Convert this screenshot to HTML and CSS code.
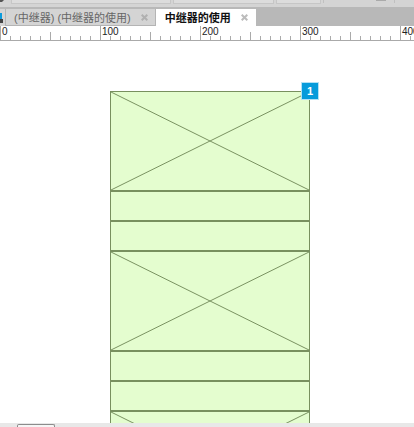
FILE: index.html
```html
<!DOCTYPE html>
<html lang="zh">
<head>
<meta charset="utf-8">
<title>中继器的使用</title>
<link rel="stylesheet" href="styles.css">
</head>
<body>
<div class="toolbar">
  <svg class="tool-icon" width="11" height="3" viewBox="0 0 11 3" aria-hidden="true"><path d="M0 0h4l-2 2H0z" fill="#555"/></svg>
  <span class="field field-wide"></span>
  <span class="field field-mid"></span>
  <span class="field field-small"></span>
  <span class="divider"></span>
  <span class="dash"></span>
  <span class="divider"></span>
</div>
<nav class="tabs">
  <svg class="tabs-icon" width="5" height="17" viewBox="0 0 5 17" aria-hidden="true"><path d="M0 4h2v6H0z" fill="#0a9bdc"/><path d="M0 10h3v4H0z" fill="#444"/></svg>
  <div class="tab">
    <a href="#master">(中继器) (中继器的使用)</a>
    <button class="close" type="button" aria-label="关闭"><svg width="7" height="7" viewBox="0 0 7 7"><path d="M.7.7l5.6 5.6M6.3.7L.7 6.3"/></svg></button>
  </div>
  <div class="tab active">
    <a href="#page">中继器的使用</a>
    <button class="close" type="button" aria-label="关闭"><svg width="7" height="7" viewBox="0 0 7 7"><path d="M.7.7l5.6 5.6M6.3.7L.7 6.3"/></svg></button>
  </div>
</nav>
<div class="ruler">
  <span>0</span><span>100</span><span>200</span><span>300</span><span>400</span>
</div>
<main class="canvas">
  <div class="repeater">
    <div class="cell picture"><svg viewBox="0 0 200 100" preserveAspectRatio="none"><path d="M0 0L200 100M0 100L200 0"/></svg></div>
    <div class="cell"></div>
    <div class="cell"></div>
    <div class="cell picture"><svg viewBox="0 0 200 100" preserveAspectRatio="none"><path d="M0 0L200 100M0 100L200 0"/></svg></div>
    <div class="cell"></div>
    <div class="cell"></div>
    <div class="cell picture"><svg viewBox="0 0 200 100" preserveAspectRatio="none"><path d="M0 0L200 100M0 100L200 0"/></svg></div>
    <span class="badge">1</span>
  </div>
</main>
<footer class="panel"><span class="panel-tab"></span></footer>
</body>
</html>
```
FILE: styles.css
```css
* { box-sizing: border-box; }

body {
  margin: 0;
  height: 100vh;
  display: flex;
  flex-direction: column;
  overflow: hidden;
  background: #fff;
  font-family: "Liberation Sans", "Noto Sans CJK SC", sans-serif;
  font-size: 11px;
}

.toolbar {
  display: flex;
  flex: none;
  height: 7px;
  background: #d4d4d4;
}
.tool-icon { flex: none; }
.field {
  height: 4px;
  border: 1px solid #c6c6c6;
  border-top: 0;
  background: #dcdcdc;
}
.field-wide { width: 160px; }
.field-mid { width: 101px; margin: 0 2px; }
.field-small { width: 45px; }
.divider { width: 1px; height: 3px; margin-left: 2px; background: #c0c0c0; }
.dash { width: 10px; height: 1px; margin: 0 6px 0 52px; background: #aaa; }

.tabs {
  display: flex;
  flex: none;
  height: 19px;
  padding-top: 2px;
  background: #b8b8b8;
}
.tabs-icon { flex: none; background: #d4d4d4; }
.tab {
  display: flex;
  align-items: center;
  gap: 10px;
  padding: 0 7px 0 8px;
  border: solid #b4b4b4;
  border-width: 0 1px 1px;
  background: #d4d4d4;
}
.tab a {
  padding-top: 2px;
  color: #666;
  line-height: 14px;
  text-decoration: none;
  white-space: nowrap;
}
.active { border-color: #fff; background: #fff; }
.active a { color: #111; font-weight: bold; }
.close {
  display: flex;
  padding: 0;
  border: 0;
  background: none;
}
.close path { stroke: #b0b0b0; stroke-width: 2; }
.active .close path { stroke: #bcbcbc; }

.ruler {
  display: flex;
  flex: none;
  height: 15px;
  overflow: hidden;
  border-bottom: 1px solid #aaa;
  background:
    repeating-linear-gradient(90deg, #aaa 0 1px, transparent 1px 100px) 0 0 / 100% 100% no-repeat,
    repeating-linear-gradient(90deg, #aaa 0 1px, transparent 1px 50px) 0 100% / 100% 8px no-repeat,
    repeating-linear-gradient(90deg, #aaa 0 1px, transparent 1px 10px) 0 100% / 100% 4px no-repeat;
}
.ruler span {
  flex: none;
  width: 100px;
  padding-left: 2px;
  color: #222;
  font-size: 10px;
  line-height: 12px;
}

.canvas {
  flex: 1;
  min-height: 0;
  overflow: hidden;
  padding: 50px 0 0 110px;
}
.repeater { position: relative; width: 200px; }
.cell {
  height: 30px;
  border: 1px solid #78905f;
  background: #e4fdcf;
}
.picture { height: 100px; }
.picture svg { display: block; width: 100%; height: 100%; }
.picture path { fill: none; stroke: #78905f; }
.badge {
  position: absolute;
  top: -9px;
  right: -9px;
  width: 18px;
  height: 18px;
  border: 1px solid #b3e1f5;
  background: #069bdb;
  color: #fff;
  font-weight: bold;
  line-height: 16px;
  text-align: center;
}

.panel {
  flex: none;
  height: 4px;
  padding: 1px 0 0 17px;
  background: #e8e8e8;
}
.panel-tab {
  display: block;
  width: 38px;
  height: 3px;
  border: 1px solid #8c8c8c;
  border-bottom: 0;
  border-radius: 2px 2px 0 0;
  background: #f6f6f6;
}
```
